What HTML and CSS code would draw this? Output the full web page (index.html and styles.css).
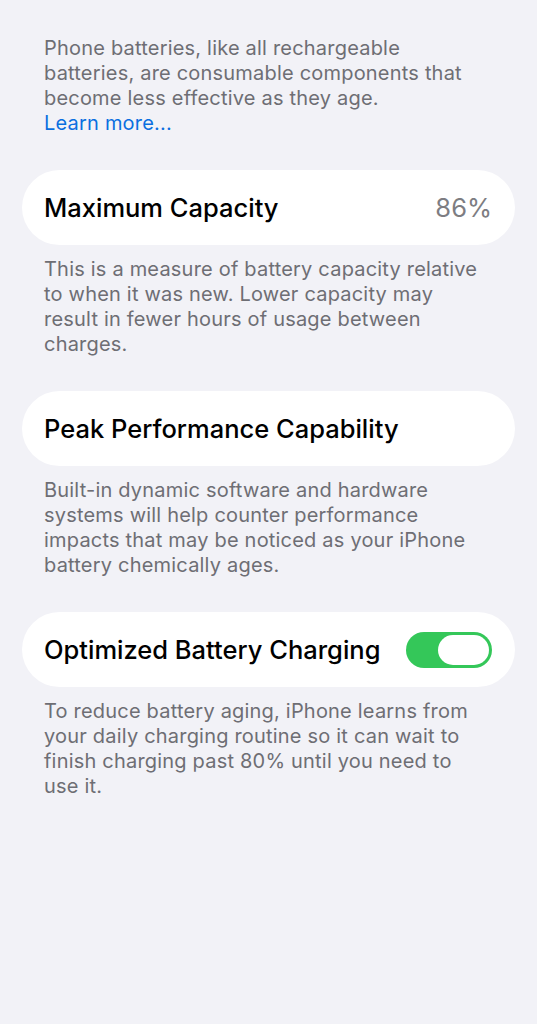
FILE: index.html
```html
<!DOCTYPE html>
<html lang="en">
<head>
  <meta charset="UTF-8">
  <title>Battery Health</title>
  <link rel="stylesheet" href="styles.css">
</head>
<body>

<div class="page">
  <p class="note">
    Phone batteries, like all rechargeable batteries, are consumable components that become less effective as they age.<br>
    <a class="link">Learn more...</a>
  </p>

  <div class="card">
    <span class="title">Maximum Capacity</span>
    <span class="value">86%</span>
  </div>
  <p class="note">
    This is a measure of battery capacity relative to when it was new. Lower capacity may result in fewer hours of usage between charges.
  </p>

  <div class="card">
    <span class="title">Peak Performance Capability</span>
  </div>
  <p class="note">
    Built-in dynamic software and hardware systems will help counter performance impacts that may be noticed as your iPhone battery chemically ages.
  </p>

  <div class="card">
    <span class="title">Optimized Battery Charging</span>
    <div class="toggle on"><div class="knob"></div></div>
  </div>
  <p class="note">
    To reduce battery aging, iPhone learns from your daily charging routine so it can wait to finish charging past 80% until you need to use it.
  </p>
</div>

</body>
</html>
```

FILE: styles.css
```css
body {
  margin: 0;
  background: #f2f2f7;
  font-family: 'Inter', 'Noto Sans', sans-serif;
  min-height: 100vh;
}
.page {
  padding: 36px 22px 40px 22px;
  display: flex;
  flex-direction: column;
}
.note {
  margin: 0 0 34px 0;
  padding: 0 28px 0 22px;
  font-size: 20px;
  line-height: 25px;
  color: #6e6e74;
  letter-spacing: 0.2px;
}
.card + .note {
  margin-top: 12px;
}
.link {
  color: #0a6fe0;
  cursor: pointer;
}
.card {
  background: #fff;
  border-radius: 38px;
  height: 75px;
  padding: 0 23px 0 22px;
  display: flex;
  align-items: center;
  justify-content: space-between;
}
.title {
  font-size: 25.5px;
  font-weight: 500;
  color: #000;
}
.value {
  font-size: 25.5px;
  color: #7d7d82;
}
.toggle {
  width: 86px;
  height: 36px;
  border-radius: 18px;
  background: #e5e5ea;
  box-sizing: border-box;
  padding: 3px;
  display: flex;
}
.toggle.on {
  background: #34c759;
  justify-content: flex-end;
}
.knob {
  width: 51px;
  height: 30px;
  border-radius: 15px;
  background: #fff;
}
```
